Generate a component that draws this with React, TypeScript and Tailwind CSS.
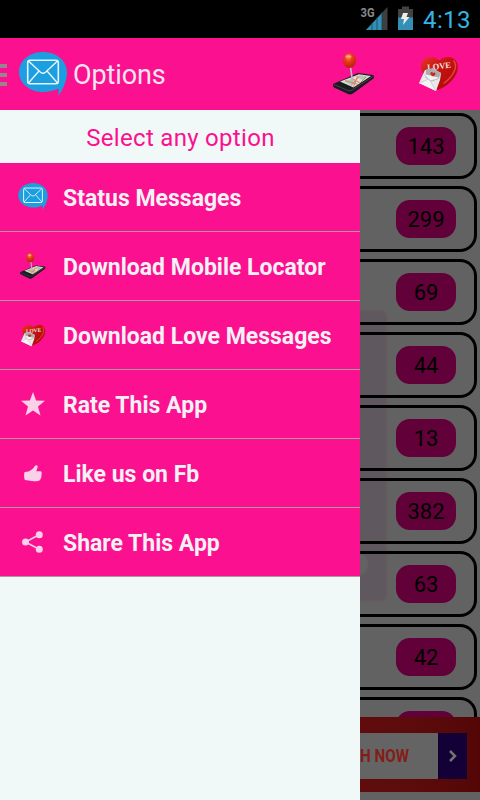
import type { ReactNode } from "react";

const counts = [143, 299, 69, 44, 13, 382, 63, 42];

function MessageIcon({ className }: { className: string }) {
    return (
        <svg viewBox="0 0 48 44" className={className} fill="none">
            <path d="M24 0C37 0 48 8.500 48 20c0 8-3.500 17.500-9 24 .8-3 .8-5.500.4-7.500C35 38.700 30 40 24 40 11 40 0 31.500 0 20S11 0 24 0Z" fill="#1b9fe0" />
            <rect x="8.700" y="8.200" width="30.600" height="23.600" rx="2.500" stroke="#e8f6fc" strokeWidth="1.600" />
            <path d="M9.500 9l12 11.300q2.500 2 5 0L38.500 9M9.500 31l10.500-12M38.500 31L28 19" stroke="#e8f6fc" strokeWidth="1.400" />
        </svg>
    );
}

function LocatorIcon({ className }: { className: string }) {
    return (
        <svg viewBox="0 0 42 42" className={className}>
            <defs>
                <radialGradient id="pin" cx="42%" cy="28%" r="75%">
                    <stop offset="0" stopColor="#ff8a50" />
                    <stop offset=".4" stopColor="#ea3c18" />
                    <stop offset="1" stopColor="#b81c08" />
                </radialGradient>
            </defs>
            <path d="M0 31L25 20l15 2q2 1 .5 3.500L20 40.500q-2.500 1.500-5 .5L1 34.500Q-.5 33 0 31Z" fill="#1b1b22" />
            <path d="M1 31.500l14 6q2 .8 4-.5L40 23.500" stroke="#5c5c66" strokeWidth=".6" fill="none" />
            <path d="M7 28.500l19-7.300 12 1.800-17.500 11.500Z" fill="#dedfd3" />
            <path d="M11 28.500l7-2.500 6 3-5 3.500ZM28 22.500l7 1-5 3.500-5-2Z" fill="#a9cdb2" />
            <path d="M12 27.500l13 4M18 25l9 5 6-6M20.500 34l4-11M27 22.500l-9 10" stroke="#dd8069" strokeWidth="1" fill="none" />
            <path d="M17.500 14l2 14.500" stroke="#c3b4c6" strokeWidth="1.700" />
            <ellipse cx="16.500" cy="7.500" rx="6.500" ry="7.500" fill="url(#pin)" />
            <ellipse cx="15.500" cy="3.500" rx="3" ry="1.300" fill="#ffbd98" opacity=".7" />
        </svg>
    );
}

function LoveIcon({ className }: { className: string }) {
    return (
        <svg viewBox="0 0 40 36" className={className}>
            <defs>
                <linearGradient id="heart" x1="0" y1="0" x2="1" y2="1">
                    <stop offset="0" stopColor="#e8342b" />
                    <stop offset=".4" stopColor="#c81410" />
                    <stop offset="1" stopColor="#a60808" />
                </linearGradient>
            </defs>
            <path d="M20 4.500C16 .3 9 0 5 3.500 .5 7.500 1.500 13.500 4.500 18L18 33.500q2.500.5 4-1C30 29 38.500 20 38.800 11.500 39 5 34.500 .8 29 1 25 1.200 22 2.500 20 4.500Z" fill="url(#heart)" />
            <path d="M34.500 4.500q3.500 4 1 10-3 7.500-11 13" stroke="#f0604f" strokeWidth="1.500" fill="none" opacity=".7" />
            <text x="8" y="13" fill="#f4e4e0" fontSize="8.500" fontWeight="bold" textLength="24" transform="rotate(-6 20 10)" className="font-['Liberation_Serif']">LOVE</text>
            <path d="M6 14l8-1.500 8 4.500-1 7-4 11L0 27Z" fill="#e9e9eb" />
            <path d="M7 13.500l6-1 9 4.500-2.500 6-7 2.500-6-4Z" fill="#a9adac" />
            <path d="M0 27l10-4 7 12M5 18l6 7 10-3" stroke="#c4c4ca" strokeWidth=".7" fill="#f4f4f5" />
            <path d="M14 20.500q-4-2.500-2-4.300 1.500-.5 2 1 2-1.500 2.500.5 0 1.500-2.500 2.800Z" fill="#d42122" />
        </svg>
    );
}

function StarIcon() {
    return (
        <svg viewBox="0 0 24 24" className="size-6" fill="#fbd0e9">
            <path d="M12 0l3.100 8.600 8.900.2-7 5.600 2.500 9.200-7.500-5.200-7.500 5.200L7 14.400 0 8.800l8.900-.2Z" />
        </svg>
    );
}

function LikeIcon() {
    return (
        <svg viewBox="0 0 18 17" className="w-[18px] h-[17px]" fill="#fbd0e9">
            <path d="M1 7q4 0 6.500-2.200Q9.500 3.500 10.500 1.500 11.800-.3 13.300.5q.8 1-.2 3.300l-.8 2.400 4.200.1q1.500.4 1.200 2-.1 1-.4 1.400.6 1-.1 2.100.2 1.300-.7 2 .1 1.800-2.500 2.200-5 .8-9.500-.5L.8 15Q-.3 11 .3 8 .4 7.200 1 7Z" />
        </svg>
    );
}

function ShareIcon() {
    return (
        <svg viewBox="0 0 21 22" className="mr-px w-[21px] h-[22px]" fill="#fbd0e9">
            <path d="M17.500 3.500L3.500 11l14 7.500" stroke="#fbd0e9" strokeWidth="1.500" fill="none" />
            <circle cx="17.300" cy="3.700" r="3.500" />
            <circle cx="3.500" cy="11" r="3.500" />
            <circle cx="17.300" cy="18.300" r="3.500" />
        </svg>
    );
}

function StatusBar() {
    return (
        <header className="flex h-[38px] bg-black">
            <svg viewBox="0 0 60 38" className="ml-[357px] w-[60px] h-[38px]">
                <path d="M9 30L30.500 7v23Z" fill="#3f3f3f" />
                <path d="M9 30L25 13v17Z" fill="#338fb3" />
                <path d="M15 22v8M20 17v13M25 12v18" stroke="#154457" strokeWidth=".8" />
                <text x="3.500" y="17" fill="#8a8a8a" stroke="#000" strokeWidth="2" paintOrder="stroke" fontSize="13.500" fontWeight="bold" textLength="14" lengthAdjust="spacingAndGlyphs" className="font-[Roboto]">3G</text>
                <path d="M41 9h4V6.500h7V9h4v21H41Z" fill="#424242" />
                <path d="M41 17.500h15V30H41Z" fill="#338fb3" />
                <path d="M46 13h5l-1.500 4h3L46 25l1-6h-3Z" fill="#ededed" />
            </svg>
            <span className="ml-[6px] pt-[1px] text-[24px] leading-[38px] tracking-[0.4px] text-[#33b5e5]">4:13</span>
        </header>
    );
}

function ActionBar() {
    return (
        <section className="flex h-[72px] bg-[#fb1090]">
            <div className="flex w-[7px] flex-col gap-[5px] pt-[26px]">
                <i className="h-1 bg-[#95858f]" />
                <i className="h-1 bg-[#95858f]" />
                <i className="h-1 bg-[#95858f]" />
            </div>
            <MessageIcon className="mt-[14px] ml-3 w-12 h-11" />
            <h1 className="ml-[6px] w-[254px] pt-px text-[27px] leading-[72px] tracking-[-0.1px] text-[#f3e5ee]">Options</h1>
            <LocatorIcon className="mt-[15px] ml-[6px] w-[42px] h-[42px]" />
            <LoveIcon className="mt-[18px] ml-11 w-10 h-9" />
        </section>
    );
}

function MenuItem({ icon, label }: { icon: ReactNode; label: string }) {
    return (
        <li className="flex h-[69px] items-center border-b border-[#a99aa2] bg-[#fb1090]">
            <span className="flex w-[66px] shrink-0 justify-center">{icon}</span>
            <span className="-ml-[3px] pt-1 whitespace-nowrap text-[23px] font-bold text-[#f4f1f5]">{label}</span>
        </li>
    );
}

function Drawer() {
    return (
        <nav className="w-[360px] bg-[#f0f8f8]">
            <h2 className="h-[53px] pt-[2px] pl-px text-center text-[24px] leading-[53px] tracking-[0.3px] text-[#fb1090]">Select any option</h2>
            <ul>
                <MenuItem icon={<MessageIcon className="mb-px w-[30px] h-[27px]" />} label="Status Messages" />
                <MenuItem icon={<LocatorIcon className="w-[26px] h-[26px]" />} label="Download Mobile Locator" />
                <MenuItem icon={<LoveIcon className="w-[25px] h-[23px]" />} label="Download Love Messages" />
                <MenuItem icon={<StarIcon />} label="Rate This App" />
                <MenuItem icon={<LikeIcon />} label="Like us on Fb" />
                <MenuItem icon={<ShareIcon />} label="Share This App" />
            </ul>
        </nav>
    );
}

function Card({ count }: { count?: number }) {
    return (
        <li className="flex h-[66px] w-[117px] shrink-0 items-center justify-end rounded-r-[17px] border-y-3 border-r-3 border-black pr-[18px]">
            <span className="h-[38px] w-[60px] rounded-[14px] bg-[#610039] pt-px text-center text-[22px] leading-[38px] text-black">{count}</span>
        </li>
    );
}

function Counts() {
    return (
        <section className="relative h-[607px] overflow-hidden pt-[3px]">
            {/* faded artwork behind the list */}
            <div className="absolute top-[199px] left-0 h-[293px] w-7 overflow-hidden rounded-r-lg border-y-2 border-r-2 border-[#645c5d] bg-[#5f595f]">
                <div className="absolute bottom-[24px] -left-[16px] size-6 rounded-full bg-[#626262]" />
            </div>
            <ul className="relative flex flex-col gap-[7px]">
                {counts.map((count) => <Card key={count} count={count} />)}
                <Card />
            </ul>
        </section>
    );
}

function Banner() {
    return (
        <section className="flex h-[75px] items-start bg-[#580909] bg-linear-to-r from-[#600c0c] via-[#5c0b0b] to-[#540606] pt-4">
            <div className="h-[46px] w-[78px] overflow-hidden bg-[#646464]">
                <span className="inline-block origin-left scale-x-[0.8] whitespace-nowrap text-[19px] leading-[46px] font-bold text-[#831d18]">H NOW</span>
            </div>
            <div className="flex h-[46px] w-[29px] items-center justify-center bg-[#130036]">
                <svg viewBox="0 0 10 12" className="w-[10px] h-3" fill="none">
                    <path d="M2 1l5 5-5 5" stroke="#737373" strokeWidth="2.500" />
                </svg>
            </div>
        </section>
    );
}

export default function App() {
    return (
        <main className="flex h-[800px] w-[480px] flex-col overflow-hidden bg-black font-['Roboto',sans-serif]">
            <StatusBar />
            <ActionBar />
            <div className="flex h-[690px]">
                <Drawer />
                <div className="w-[120px] bg-[#626262]">
                    <Counts />
                    <Banner />
                </div>
            </div>
        </main>
    );
}
